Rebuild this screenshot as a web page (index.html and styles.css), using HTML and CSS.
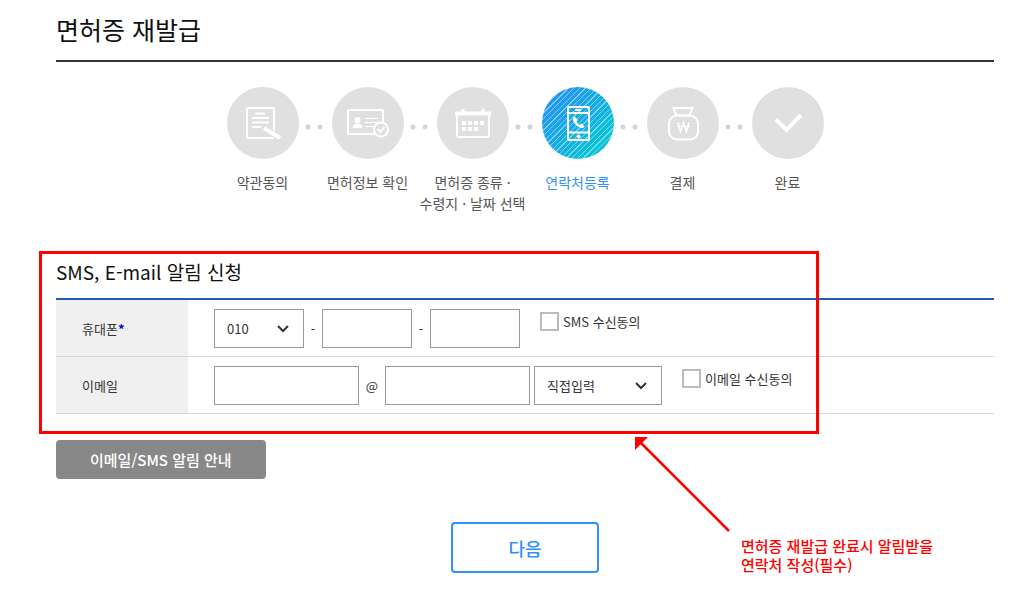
FILE: index.html
```html
<!DOCTYPE html>
<html lang="ko">
<head>
  <meta charset="UTF-8">
  <meta name="viewport" content="width=device-width, initial-scale=1.0">
  <title>면허증 재발급</title>
  <link rel="stylesheet" href="styles.css">
</head>
<body>
  <main class="container">
    <h1 class="page-title">면허증 재발급</h1>

    <ol class="steps">
      <li class="step">
        <span class="step-icon">
          <svg viewBox="0 0 72 72" fill="none" stroke="#fff" stroke-width="2">
            <rect x="20" y="21" width="27" height="30" rx="1"/>
            <path d="M28 26.500h10M25 31h17M25 35.500h17M25 40h9"/>
            <path d="M37 41l16 10" stroke="#e0e0e0" stroke-width="6"/>
            <path d="M37 41l16 10" stroke-width="4"/>
          </svg>
        </span>
        약관동의
      </li>
      <li class="step">
        <span class="step-icon">
          <svg viewBox="0 0 72 72" fill="none" stroke="#fff" stroke-width="2">
            <rect x="16" y="23" width="35" height="24" rx="1"/>
            <circle cx="25.500" cy="33" r="3" fill="#fff" stroke="none"/>
            <path d="M20.500 41c0-3 2-4.500 5-4.500s5 1.500 5 4.500z" fill="#fff" stroke="none"/>
            <path d="M33 31.500h13M33 35.500h13M33 39.500h9" stroke-width="1"/>
            <circle cx="49" cy="42.500" r="7" fill="#e0e0e0"/>
            <path d="M45.500 42l3 3 4-5"/>
          </svg>
        </span>
        면허정보 확인
      </li>
      <li class="step">
        <span class="step-icon">
          <svg viewBox="0 0 72 72" fill="none" stroke="#fff" stroke-width="2">
            <path d="M20 28v20q0 2 2 2h28q2 0 2-2V28"/>
            <path d="M18 26.500h36" stroke-width="4"/>
            <path d="M26 22v5M46 22v5" stroke-width="3"/>
            <path d="M25 36h22M25 42h16" stroke-width="4" stroke-dasharray="4 2"/>
          </svg>
        </span>
        면허증 종류 ·<br>수령지 · 날짜 선택
      </li>
      <li class="step active" aria-current="step">
        <span class="step-icon">
          <svg viewBox="0 0 72 72" fill="none" stroke="#fff" stroke-width="2">
            <rect x="26" y="20" width="21" height="33" rx="1"/>
            <path d="M26 26h21M26 45.500h21"/>
            <path d="M33 23h6" stroke-width="2"/>
            <circle cx="36.500" cy="49.500" r="2" fill="#fff" stroke="none"/>
            <path d="M32.500 29.500c-3 2-1 6 1.500 8.500s6.500 4.500 8.500 1.500l-3-3-2 1.500c-1.500-.8-2.500-2-3-3.500l1.500-1.500z" fill="#fff" stroke="none"/>
          </svg>
        </span>
        연락처등록
      </li>
      <li class="step">
        <span class="step-icon">
          <svg viewBox="0 0 72 72" fill="none" stroke="#fff" stroke-width="2">
            <path d="M26.500 21h19l-3 7.500h-13z"/>
            <rect x="22" y="28.500" width="29" height="24" rx="8"/>
            <path d="M31 35.500l2.500 9 3-9 3 9 2.500-9" stroke-width="1.500"/>
            <path d="M30 39.500h13" stroke-width="1"/>
          </svg>
        </span>
        결제
      </li>
      <li class="step">
        <span class="step-icon">
          <svg viewBox="0 0 72 72" fill="none" stroke="#fff" stroke-width="4">
            <path d="M24 32.500l10.500 10.500 14.500-15"/>
          </svg>
        </span>
        완료
      </li>
    </ol>

    <form class="notice-form">
      <h2 class="section-title">SMS, E-mail 알림 신청</h2>
      <table class="form-table">
        <tr>
          <th scope="row"><label for="phone1">휴대폰<span class="required">*</span></label></th>
          <td>
            <div class="field-row">
              <select id="phone1" class="phone">
                <option>010</option>
                <option>011</option>
                <option>016</option>
              </select>
              <span class="dash">-</span>
              <input type="text" class="phone" aria-label="휴대폰 가운데 자리">
              <span class="dash">-</span>
              <input type="text" class="phone" aria-label="휴대폰 끝 자리">
              <label class="agree"><input type="checkbox">SMS 수신동의</label>
            </div>
          </td>
        </tr>
        <tr>
          <th scope="row"><label for="email">이메일</label></th>
          <td>
            <div class="field-row">
              <input type="text" id="email" class="email">
              <span class="at">@</span>
              <input type="text" class="email" aria-label="이메일 도메인">
              <select class="domain" aria-label="도메인 선택">
                <option>직접입력</option>
                <option>naver.com</option>
                <option>gmail.com</option>
              </select>
              <label class="agree"><input type="checkbox">이메일 수신동의</label>
            </div>
          </td>
        </tr>
      </table>

      <button type="button" class="btn-info">이메일/SMS 알림 안내</button>
      <button type="submit" class="btn-next">다음</button>

      <!-- guide marks over the form -->
      <div class="guide-box"></div>
      <svg class="guide-arrow" viewBox="0 0 96 96">
        <path d="M6 6l88 88" stroke="#f00" stroke-width="2.500"/>
        <path d="M0 0h13L0 13z" fill="#f00"/>
      </svg>
      <p class="guide-text">면허증 재발급 완료시 알림받을<br>연락처 작성(필수)</p>
    </form>
  </main>
</body>
</html>
```
FILE: styles.css
```css
* {
  box-sizing: border-box;
}
body {
  margin: 0;
  background: #fff;
  color: #333;
  font-family: "Noto Sans CJK KR", sans-serif;
  font-size: 13px;
}
input, select, button {
  font-family: inherit;
  font-size: 13px;
  color: #333;
}
.container {
  padding: 0 30px 0 56px;
}
.page-title {
  margin: 0;
  padding: 11px 0 13px;
  border-bottom: 2px solid #333;
  color: #111;
  font-size: 25px;
  font-weight: 400;
  line-height: 36px;
}

/* steps */
.steps {
  display: flex;
  justify-content: center;
  margin: 25px 0 0;
  padding: 0;
  list-style: none;
}
.step {
  display: flex;
  flex-direction: column;
  align-items: center;
  width: 105px;
  color: #555;
  font-size: 14px;
  line-height: 21px;
  text-align: center;
  white-space: nowrap;
  background-repeat: no-repeat;
  background-size: 6px 6px;
  background-image: radial-gradient(circle, #d4d4d4 2px, transparent 3px), radial-gradient(circle, #d4d4d4 2px, transparent 3px);
  background-position: left 2px top 37px, right 4px top 37px;
}
.step:first-child {
  background-position: -10px 0, right 4px top 37px;
}
.step:last-child {
  background-position: left 2px top 37px, -10px 0;
}
.step-icon {
  width: 72px;
  height: 72px;
  margin-bottom: 13px;
  border-radius: 50%;
  background: #e0e0e0;
}
.step-icon svg {
  display: block;
}
.step.active {
  color: #2e93f8;
}
.active .step-icon {
  background: repeating-linear-gradient(135deg, rgba(255, 255, 255, 0) 0 3px, rgba(255, 255, 255, 0.45) 3px 4px), linear-gradient(135deg, #2492f5 10%, #05c8d2 90%);
}

/* form */
.notice-form {
  position: relative;
  margin-top: 42px;
}
.section-title {
  margin: 0;
  padding-bottom: 10px;
  color: #111;
  font-size: 19px;
  font-weight: 400;
  line-height: 32px;
}
.form-table {
  width: 100%;
  border-collapse: separate;
  border-spacing: 0;
  border-top: 2px solid #1c5fb0;
}
.form-table th {
  width: 132px;
  padding: 0 0 0 26px;
  border-bottom: 1px solid #d9d9d9;
  background: #f0f0f0;
  font-weight: 400;
  text-align: left;
}
.form-table td {
  padding: 9px 0 8px 26px;
  border-bottom: 1px solid #d9d9d9;
}
.required {
  color: #00f;
  font-weight: 700;
}
.field-row {
  display: flex;
  align-items: center;
}
.field-row input[type="text"], .field-row select {
  height: 39px;
  padding: 0 12px;
  border: 1px solid #999;
  border-radius: 0;
  background-color: #fff;
}
.field-row select {
  appearance: none;
  background-image: url("data:image/svg+xml,%3Csvg xmlns='http://www.w3.org/2000/svg' width='12' height='8' fill='none' stroke='%23333' stroke-width='2'%3E%3Cpath d='M1 1l5 5 5-5'/%3E%3C/svg%3E");
  background-repeat: no-repeat;
  background-position: right 14px center;
}
.field-row .phone {
  width: 90px;
}
.field-row .email {
  width: 145px;
}
.field-row .domain {
  width: 128px;
  margin-left: 4px;
}
.dash {
  width: 18px;
  text-align: center;
}
.at {
  width: 26px;
  text-align: center;
}
.agree {
  display: flex;
  align-items: center;
  align-self: flex-start;
  gap: 4px;
  margin: 3px 0 0 20px;
}
.agree input {
  appearance: none;
  width: 19px;
  height: 19px;
  margin: 0;
  border: 2px solid #bbb;
  background: #fff;
}

/* buttons */
.btn-info {
  display: block;
  height: 39px;
  margin-top: 26px;
  padding: 0 34px;
  border: 0;
  border-radius: 4px;
  background: #888;
  color: #fff;
  font-size: 15px;
  font-weight: 500;
}
.btn-next {
  display: block;
  width: 148px;
  height: 51px;
  margin: 43px auto 0;
  border: 2px solid #2e93f8;
  border-radius: 4px;
  background: #fff;
  color: #2e93f8;
  font-size: 18px;
  font-weight: 500;
}

/* guide marks */
.guide-box {
  position: absolute;
  top: -5px;
  left: -17px;
  width: 780px;
  height: 183px;
  border: 3px solid #f00;
  pointer-events: none;
}
.guide-arrow {
  position: absolute;
  top: 181px;
  left: 579px;
  width: 96px;
  height: 96px;
}
.guide-text {
  position: absolute;
  top: 280px;
  left: 685px;
  margin: 0;
  color: #f00;
  font-size: 15px;
  font-weight: 500;
  line-height: 19px;
  white-space: nowrap;
}
```
